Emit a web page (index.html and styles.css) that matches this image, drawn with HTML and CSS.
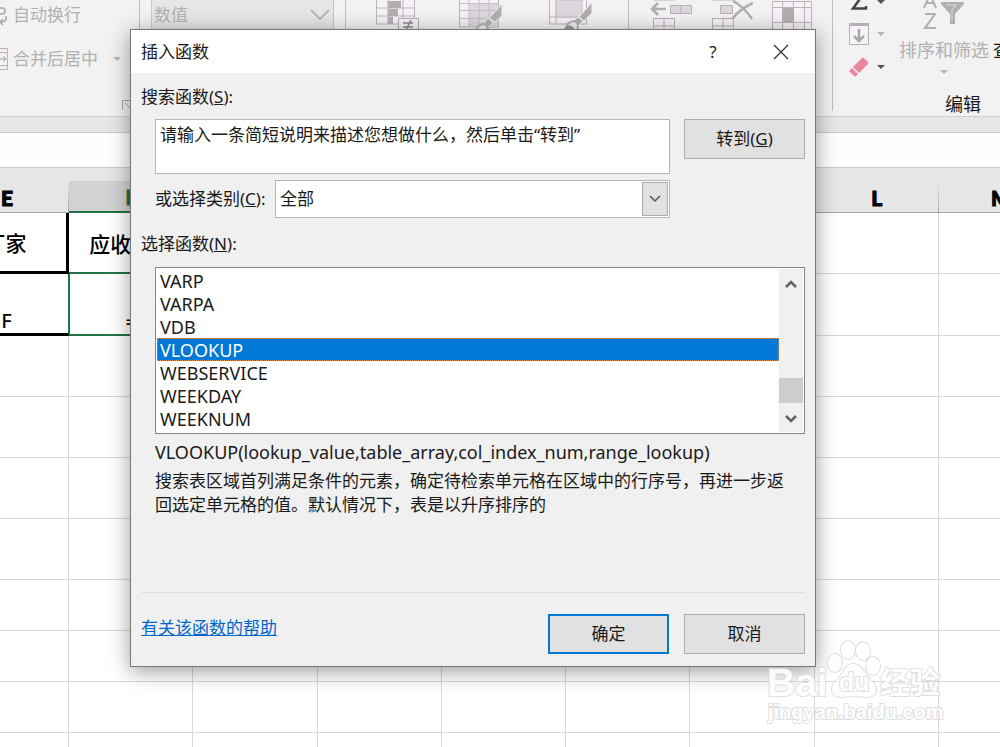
FILE: index.html
```html
<!DOCTYPE html>
<html lang="zh-CN">
<head>
    <meta charset="UTF-8">
    <meta name="viewport" content="width=device-width, initial-scale=1.0">
    <title>插入函数</title>
    <link rel="stylesheet" href="styles.css">
</head>
<body>
    <header class="ribbon">
        <div class="group group-align">
            <button class="tool" disabled>
                <svg width="8" height="22" viewBox="0 0 8 22"><path d="M0 4h2q3 0 3 3t-3 3H0M6 12v3q0 3-6 3M3 15l-3 3 3 3" fill="none" stroke="#a8a8a8" stroke-width="1.5"/></svg>
                自动换行
            </button>
            <button class="tool" disabled>
                <svg width="8" height="22" viewBox="0 0 8 22"><path d="M0 .5h7.500v21H0M0 4.500h7M0 17.500h7" fill="#f5eff5" stroke="#bcb2bc"/><path d="M0 11h6M3 8l3 3-3 3" fill="none" stroke="#a0a0a0"/></svg>
                合并后居中
                <span class="arrow arrow-merge"></span>
            </button>
            <svg class="launcher" width="9" height="10" viewBox="0 0 9 10"><path d="M.5 10V.5H9M3 3l6 6" fill="none" stroke="#a8a8a8"/></svg>
        </div>
        <div class="group group-number">
            <select class="format" aria-label="数字格式" disabled><option>数值</option></select>
        </div>
        <div class="group group-styles">
            <!-- conditional formatting, table style, cell style -->
            <svg width="44" height="32" viewBox="0 0 44 32">
                <path d="M.5-1h38v25H.5zM.5 8h38M.5 16h38M12 0v24M27 0v24" fill="#f7f0f7" stroke="#bbb5bb"/>
                <path d="M12 1h13v7H12zM12 9h10v7H12zM12 17h5v7h-5z" fill="#b0aeb0"/>
                <path d="M22.500 18.500h20v13h-20z" fill="#f5f0f5" stroke="#b5b0b5"/>
                <path d="M27 23h10M27 27h10M35 20l-5 10" fill="none" stroke="#888" stroke-width="1.500"/>
            </svg>
            <svg width="51" height="32" viewBox="0 0 51 32">
                <path d="M.5-1h39v28H.5z" fill="#f7f0f7" stroke="#bbb5bb"/>
                <path d="M10 4h29v23H10z" fill="#ddd7dd"/>
                <path d="M1 3.500h38M1 10.500h38M1 18.500h38M10 0v26M20 0v26M30 0v26" fill="none" stroke="#c4bec4"/>
                <path d="M43 4v12l-7 6-6-4zM29 18l5 4-4 5-5-4z" fill="#b0aeb0" stroke="#f2f2f2"/>
                <path d="M17 32q1-8 8-8 5 2 4 8z" fill="#eee" stroke="#b0aeb0" stroke-width="2"/>
                <path d="M18 32q4-4 9 0z" fill="#999"/>
            </svg>
            <svg width="44" height="32" viewBox="0 0 44 32">
                <path d="M.5-1h37v25H.5zM.5 17h37M7 0v24" fill="#f7f0f7" stroke="#bbb5bb"/>
                <path d="M7 0h26v17H7z" fill="#ddd7dd" stroke="#c4bec4"/>
                <path d="M43 2v11l-8 8-5-4zM29 17l5 4-4 4-5-4z" fill="#b0aeb0" stroke="#f2f2f2"/>
                <path d="M17 30q0-8 8-9 6 2 3 9z" fill="#eee" stroke="#b0aeb0" stroke-width="2"/>
                <path d="M14 31q5-9 11-3v4z" fill="#999"/>
            </svg>
        </div>
        <div class="group group-cells">
            <!-- insert, delete, format -->
            <svg width="42" height="30" viewBox="0 0 42 30">
                <path d="M3 0h22" stroke="#bbb5bb" fill="none"/>
                <path d="M16 9H2M8 3L2 9l6 6" fill="none" stroke="#b0aeb0" stroke-width="2.500"/>
                <path d="M20.500 5.500h21v8h-21zM31 6v7" fill="#ddd7dd" stroke="#b5b0b5"/>
                <path d="M3.500 18.500h21v15h-21zM14 18v12M3 26h22" fill="#f7f0f7" stroke="#b5b0b5"/>
            </svg>
            <svg width="42" height="30" viewBox="0 0 42 30">
                <path d="M1 0h21" stroke="#bbb5bb" fill="none"/>
                <path d="M9.500 5.500h12v8h-12z" fill="#ddd7dd" stroke="#b5b0b5"/>
                <path d="M1.500 18.500h21v15h-21zM12 18v12M1 26h22" fill="#f7f0f7" stroke="#b5b0b5"/>
                <path d="M22 1q10 5 19 18M42 3Q29 9 21 19" fill="none" stroke="#b0aeb0" stroke-width="2.500"/>
            </svg>
            <svg width="40" height="30" viewBox="0 0 40 30">
                <path d="M.5 1.500h39v32H.5zM.5 7.500h39M.5 22.500h39M10.500 1v30M21.500 1v30M32.500 1v30" fill="#f7f0f7" stroke="#bbb5bb"/>
                <path d="M11 8h11v15H11z" fill="#b0aeb0"/>
            </svg>
        </div>
        <div class="group group-edit">
            <div class="edit-tools">
                <div class="edit-buttons">
                    <button class="icon-button" aria-label="自动求和">
                        <svg width="20" height="11" viewBox="0 0 20 11"><path d="M13-4L4 8.500h13V6" fill="none" stroke="#444" stroke-width="2.500"/></svg>
                        <svg width="8" height="11" viewBox="0 0 8 11"><path d="M0 0h8L4 4z" fill="#555"/></svg>
                    </button>
                    <button class="icon-button" aria-label="填充" disabled>
                        <svg width="20" height="22" viewBox="0 0 20 22"><path d="M.5.500h19v21H.5z" fill="#f7f2f7" stroke="#b5b0b5"/><path d="M0 0h20v3H0z" fill="#b5b0b5"/><path d="M10 6v12M5 13l5 5 5-5" fill="none" stroke="#a8a6a8" stroke-width="2.500"/></svg>
                        <span class="arrow"></span>
                    </button>
                    <button class="icon-button" aria-label="清除">
                        <svg width="20" height="20" viewBox="0 0 20 20"><path d="M13 1q1-1 2 0l4 4q1 1 0 2l-9 9-6-6z" fill="#e8869a"/><path d="M3 11l6 6-2 2q-1 1-2 0l-4-4q-1-1 0-2z" fill="#e8869a"/></svg>
                        <span class="arrow arrow-dark"></span>
                    </button>
                </div>
                <button class="sort" disabled>
                    <svg width="42" height="30" viewBox="0 0 42 30">
                        <path d="M1 8L7-6l6 14M3 3h8M2 14h10L2 28h11" fill="none" stroke="#b0aeb0" stroke-width="2"/>
                        <path d="M18 2h23v2l-9 10v10h-5V14l-9-10z" fill="#b0aeb0"/>
                        <path d="M23 5h10l-4 5v11" fill="none" stroke="#d0cdd0" stroke-width="1.500"/>
                    </svg>
                    <span>排序和筛选</span>
                    <span class="arrow"></span>
                </button>
                <button class="find">查</button>
            </div>
            <div class="group-name">编辑</div>
        </div>
    </header>

    <div class="formula-bar"></div>

    <main class="sheet">
        <table class="grid">
            <thead>
                <tr><th>E</th><th class="current">F</th><th></th><th></th><th></th><th></th><th></th><th>L</th><th>M</th></tr>
            </thead>
            <tbody>
                <tr class="row-title"><td class="boxed side">厂家</td><td class="receivable">应收</td><td></td><td></td><td></td><td></td><td></td><td></td><td></td></tr>
                <tr class="row-entry"><td class="boxed beside">F</td><td class="active">=</td><td></td><td></td><td></td><td></td><td></td><td></td><td></td></tr>
                <tr><td></td><td></td><td></td><td></td><td></td><td></td><td></td><td></td><td></td></tr>
                <tr><td></td><td></td><td></td><td></td><td></td><td></td><td></td><td></td><td></td></tr>
                <tr><td></td><td></td><td></td><td></td><td></td><td></td><td></td><td></td><td></td></tr>
                <tr><td></td><td></td><td></td><td></td><td></td><td></td><td></td><td></td><td></td></tr>
                <tr class="short"><td></td><td></td><td></td><td></td><td></td><td></td><td></td><td></td><td></td></tr>
                <tr class="short"><td></td><td></td><td></td><td></td><td></td><td></td><td></td><td></td><td></td></tr>
                <tr class="short"><td></td><td></td><td></td><td></td><td></td><td></td><td></td><td></td><td></td></tr>
                <tr class="short"><td></td><td></td><td></td><td></td><td></td><td></td><td></td><td></td><td></td></tr>
            </tbody>
        </table>
    </main>

    <div class="dialog" role="dialog" aria-labelledby="dialog-title">
        <div class="title-bar">
            <span id="dialog-title">插入函数</span>
            <button class="title-button">?</button>
            <button class="title-button" aria-label="关闭">
                <svg width="16" height="16" viewBox="0 0 16 16"><path d="M1 1l14 14M15 1L1 15" stroke="#333" stroke-width="1.300"/></svg>
            </button>
        </div>
        <form class="dialog-body">
            <label for="search">搜索函数(<u>S</u>):</label>
            <div class="search-row">
                <textarea id="search">请输入一条简短说明来描述您想做什么，然后单击“转到”</textarea>
                <button type="button" class="button">转到(<u>G</u>)</button>
            </div>
            <div class="category-row">
                <label for="category">或选择类别(<u>C</u>):</label>
                <div class="combo">
                    <select id="category"><option>全部</option></select>
                    <span class="combo-arrow"><svg width="12" height="8" viewBox="0 0 12 8"><path d="M1 1l5 5 5-5" fill="none" stroke="#555" stroke-width="1.500"/></svg></span>
                </div>
            </div>
            <label for="functions">选择函数(<u>N</u>):</label>
            <div class="list">
                <select id="functions" size="7">
                    <option>VARP</option>
                    <option>VARPA</option>
                    <option>VDB</option>
                    <option selected>VLOOKUP</option>
                    <option>WEBSERVICE</option>
                    <option>WEEKDAY</option>
                    <option>WEEKNUM</option>
                </select>
                <div class="scrollbar">
                    <svg width="12" height="9" viewBox="0 0 12 9"><path d="M1 8l5-5 5 5" fill="none" stroke="#606060" stroke-width="2.500"/></svg>
                    <div class="thumb"></div>
                    <svg width="12" height="9" viewBox="0 0 12 9"><path d="M1 1l5 5 5-5" fill="none" stroke="#606060" stroke-width="2.500"/></svg>
                </div>
            </div>
            <div class="syntax">VLOOKUP(lookup_value,table_array,col_index_num,range_lookup)</div>
            <p class="description">搜索表区域首列满足条件的元素，确定待检索单元格在区域中的行序号，再进一步返<br>回选定单元格的值。默认情况下，表是以升序排序的</p>
            <div class="dialog-footer">
                <a href="#">有关该函数的帮助</a>
                <button type="button" class="button primary">确定</button>
                <button type="button" class="button">取消</button>
            </div>
        </form>
    </div>

    <svg class="watermark" width="184" height="92" viewBox="0 0 184 92">
        <g class="mark">
            <text class="mark-name" x="3" y="60">Bai</text>
            <ellipse cx="71" cy="27" rx="7" ry="9"/>
            <ellipse cx="84" cy="14" rx="7" ry="9"/>
            <ellipse cx="99" cy="15" rx="7" ry="9"/>
            <ellipse cx="109" cy="30" rx="7" ry="9"/>
            <path d="M89 28c8 0 10 7 15 13s9 8 8 14c-2 9-13 5-22 5s-20 4-22-5c-1-7 4-9 8-14s5-13 13-13z"/>
            <text class="mark-du" x="75" y="55">du</text>
            <text class="mark-cn" x="116" y="57">经验</text>
            <text class="mark-url" x="4" y="83">jingyan.baidu.com</text>
        </g>
    </svg>
</body>
</html>
```

FILE: styles.css
```css
* {
    box-sizing: border-box;
}

body {
    font-family: 'Noto Sans', 'Noto Sans CJK SC', sans-serif;
    font-size: 17px;
    line-height: 24px;
    margin: 0;
    height: 100vh;
    overflow: hidden;
    background-color: #fff;
    color: #1a1a1a;
    display: flex;
    flex-direction: column;
}

button, select, textarea {
    font: inherit;
    color: inherit;
    margin: 0;
}

svg {
    display: block;
    flex: none;
}

/* Ribbon */
.ribbon {
    display: flex;
    flex: none;
    height: 117px;
    background-color: #f2f2f2;
    border-bottom: 1px solid #d0d0d0;
}

.group {
    flex: none;
    display: flex;
    height: 111px;
    border-right: 1px solid #bdbdbd;
}

.group-align {
    width: 140px;
    flex-direction: column;
    gap: 20px;
    padding-top: 3px;
}

.tool {
    display: flex;
    align-items: center;
    gap: 5px;
    height: 24px;
    padding: 0;
    border: 0;
    background: none;
    color: #b1b1b1;
    white-space: nowrap;
}

.arrow {
    border: 4px solid transparent;
    border-top-color: #b8b8b8;
    border-bottom: 0;
}

.arrow-merge {
    margin-left: 10px;
}

.arrow-dark {
    border-top-color: #555;
}

.launcher {
    margin: 9px 8px 0 auto;
}

.group-number {
    width: 206px;
    padding: 0 11px;
}

.format {
    appearance: none;
    width: 100%;
    height: 30px;
    padding: 0 2px;
    border: 1px solid #c6c6c6;
    border-top: 0;
    border-radius: 0;
    opacity: 1;
    color: #b1b1b1;
    background: #e6e6e6 url("data:image/svg+xml,%3Csvg xmlns='http://www.w3.org/2000/svg' width='20' height='12'%3E%3Cpath d='M1 1l9 9 9-9' fill='none' stroke='%23a8a8a8' stroke-width='1.500'/%3E%3C/svg%3E") no-repeat right 3px center;
}

.group-styles {
    width: 283px;
    padding-left: 30px;
    gap: 39px;
}

.group-cells {
    width: 204px;
    padding-left: 21px;
    gap: 19px;
}

.group-edit {
    flex: 1;
    min-width: 0;
    height: 116px;
    flex-direction: column;
    justify-content: space-between;
    border: 0;
}

.edit-tools {
    display: flex;
    padding-left: 16px;
}

.edit-buttons {
    display: flex;
    flex: none;
    flex-direction: column;
    gap: 12px;
    width: 50px;
}

.icon-button {
    display: flex;
    align-items: center;
    gap: 8px;
    padding: 0;
    border: 0;
    background: none;
}

.sort {
    display: flex;
    flex: none;
    flex-direction: column;
    align-items: center;
    gap: 8px;
    width: 90px;
    padding: 0;
    border: 0;
    background: none;
    color: #b1b1b1;
    font-size: 18px;
    white-space: nowrap;
}

.find {
    flex: none;
    align-self: flex-start;
    margin: 38px 0 0 4px;
    padding: 0;
    border: 0;
    background: none;
    font-size: 18px;
}

.group-name {
    padding-left: 112px;
    font-size: 18px;
}

.formula-bar {
    flex: none;
    height: 51px;
    border-top: 15px solid #e6e6e6;
    border-bottom: 1px solid #cacaca;
    background-color: #fefefe;
    box-shadow: inset 0 1px #cacaca;
}

/* Worksheet, scrolled part of a column to the left */
.sheet {
    flex: 1;
    min-height: 0;
    overflow: hidden;
    background: linear-gradient(#e6e6e6 45px, #fff 45px);
}

.grid {
    table-layout: fixed;
    width: 1118px;
    margin-left: -55px;
    border-spacing: 0;
    font-size: 21px;
    font-weight: 500;
    color: #000;
}

.grid th {
    height: 45px;
    padding: 15px 0 0;
    border-bottom: 1px solid #a6a6a6;
    background: linear-gradient(transparent, #a6a6a6) no-repeat right bottom / 1px 30px;
    font-family: Lato, sans-serif;
    font-size: 21px;
    font-weight: 900;
    line-height: 28px;
    -webkit-text-stroke: 1px;
}

.grid .current {
    border-bottom: 2px solid #217346;
    background: linear-gradient(#d2d2d2, #d2d2d2) no-repeat bottom / 100% 30px;
    color: #217346;
}

.grid td {
    height: 61px;
    padding: 0;
    border-right: 1px solid #d8d8d8;
    border-bottom: 1px solid #d8d8d8;
    text-align: center;
}

.grid .short td {
    height: 51px;
}

.grid .boxed {
    border-bottom: 3px solid #000;
}

.grid .row-title td {
    padding-top: 2px;
}

.grid .side {
    border-right: 3px solid #000;
}

.grid .receivable {
    padding-left: 20px;
    text-align: left;
    border-bottom: 2px solid #217346;
}

.grid .row-entry td {
    height: 62px;
    vertical-align: bottom;
    font-size: 20px;
    line-height: 24px;
}

.grid .beside {
    border-right: 1px solid #217346;
}

.grid .active {
    border: 1px solid #217346;
    border-top: 0;
    border-bottom-width: 2px;
}

/* Insert function window */
.dialog {
    position: absolute;
    top: 29px;
    left: 130px;
    width: 686px;
    border: 1px solid #777;
    background-color: #f0f0f0;
    box-shadow: 0 4px 20px rgba(0, 0, 0, 0.4);
}

.title-bar {
    display: flex;
    align-items: center;
    height: 43px;
    padding-left: 10px;
    background-color: #fff;
}

.title-bar span {
    flex: 1;
}

.title-button {
    display: flex;
    align-items: center;
    justify-content: center;
    width: 68px;
    height: 42px;
    padding: 0;
    border: 0;
    background: none;
}

.dialog-body {
    padding: 12px 10px;
}

.dialog-body label {
    display: block;
}

.search-row {
    display: flex;
    align-items: flex-start;
    gap: 14px;
    margin: 10px 0 6px 14px;
}

.search-row textarea {
    flex: 1;
    height: 55px;
    padding: 3px 4px;
    border: 1px solid #b4b6bd;
    border-radius: 0;
    background-color: #fff;
    resize: none;
    outline: none;
    overflow: hidden;
}

.button {
    width: 121px;
    height: 40px;
    padding: 0;
    border: 1px solid #adadad;
    border-radius: 0;
    background-color: #e1e1e1;
}

.button.primary {
    border: 2px solid #0078d7;
}

.category-row {
    display: flex;
    align-items: center;
    justify-content: space-between;
    margin: 0 135px 14px 14px;
}

.combo {
    display: flex;
    width: 395px;
    height: 38px;
    padding: 1px;
    border: 1px solid #b4b6bd;
    background-color: #fff;
}

.combo select {
    appearance: none;
    flex: 1;
    padding: 0 3px;
    border: 0;
    background: none;
    outline: none;
}

.combo-arrow {
    display: flex;
    align-items: center;
    justify-content: center;
    width: 26px;
    border: 1px solid #adadad;
    background-color: #e1e1e1;
}

.list {
    display: flex;
    height: 167px;
    margin: 11px 0 6px 14px;
    padding: 1px;
    border: 1px solid #828790;
    background-color: #fff;
}

.list select {
    flex: 1;
    height: 163px;
    padding: 0;
    border: 0;
    border-radius: 0;
    background: none;
    outline: none;
    overflow: hidden;
    font-size: 18px;
}

.list option {
    height: 23px;
    min-height: 23px;
    padding: 0 3px;
    line-height: 23px;
}

.list option:checked {
    background: linear-gradient(#0078d7, #0078d7);
    -webkit-text-fill-color: #fff;
    outline: 1px dotted #e0924a;
    outline-offset: -1px;
}

.scrollbar {
    display: flex;
    flex-direction: column;
    align-items: center;
    width: 24px;
    padding: 10px 0 8px;
    background-color: #f0f0f0;
}

.thumb {
    width: 24px;
    height: 25px;
    margin: auto 0 12px;
    background-color: #cdcdcd;
}

.syntax {
    margin-left: 14px;
    font-size: 18px;
}

.description {
    margin: 5px 0 75px 14px;
    white-space: nowrap;
}

.dialog-footer {
    display: flex;
    gap: 15px;
    padding-top: 21px;
    border-top: 1px solid #dfdfdf;
}

.dialog-footer a {
    margin: 2px auto 0 0;
    color: #0066cc;
}

/* Site mark over the lower right corner */
.watermark {
    position: absolute;
    top: 636px;
    left: 764px;
    font-weight: bold;
    opacity: 0.9;
}

.mark {
    fill: #fff;
    stroke: #dcdcdc;
    stroke-width: 2px;
    paint-order: stroke;
}

.mark-name {
    font-family: 'Liberation Sans', sans-serif;
    font-size: 39px;
}

.mark-du {
    font-family: 'Liberation Sans', sans-serif;
    font-size: 25px;
}

.mark-cn {
    font-size: 30px;
}

.mark-url {
    font-family: 'Liberation Sans', sans-serif;
    font-size: 20px;
}
```
